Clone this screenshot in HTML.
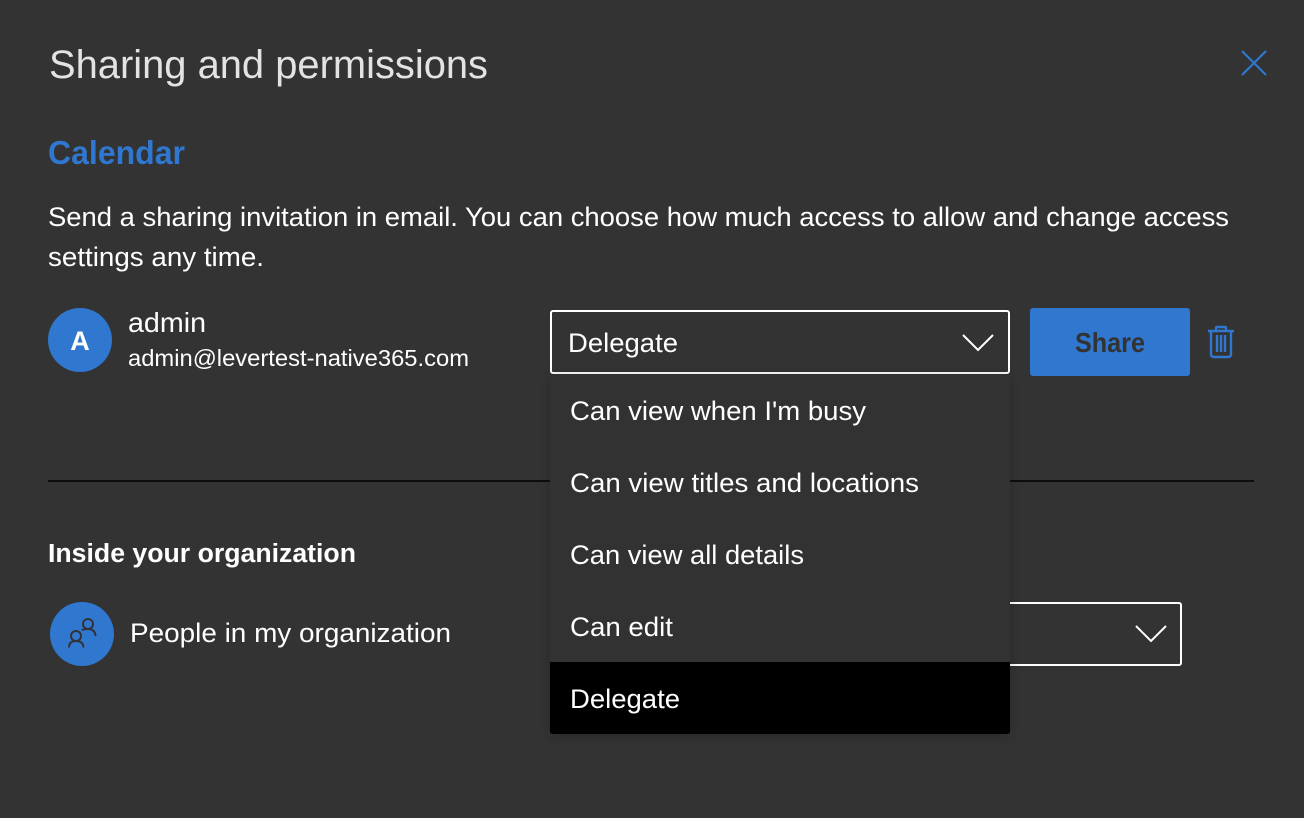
<!DOCTYPE html>
<html><head><meta charset="utf-8"><style>
html,body{margin:0;padding:0;background:#333;width:1304px;height:818px;overflow:hidden}
svg{display:block}
text{font-family:"Liberation Sans",sans-serif;fill:#fff}
</style></head><body>
<svg width="1304" height="818" viewBox="0 0 1304 818" xmlns="http://www.w3.org/2000/svg">
<defs><filter id="s" x="-10%" y="-10%" width="120%" height="120%"><feDropShadow dx="0" dy="2" stdDeviation="6" flood-color="#000" flood-opacity=".22"/></filter></defs>
<rect width="1304" height="818" fill="#333"/>
<text x="49" y="78" font-size="40" fill-opacity=".92" style="fill:#f2f2f2" textLength="439" lengthAdjust="spacingAndGlyphs">Sharing and permissions</text>
<path d="M1242 51L1266 75M1266 51L1242 75" stroke="#2f77cf" stroke-width="2.200" fill="none"/>
<text x="48" y="164" font-size="33" font-weight="700" style="fill:#2f77cf" textLength="137" lengthAdjust="spacingAndGlyphs">Calendar</text>
<text x="48" y="226" font-size="26.500" textLength="1181" lengthAdjust="spacingAndGlyphs">Send a sharing invitation in email. You can choose how much access to allow and change access</text>
<text x="48" y="266" font-size="26.500" textLength="216" lengthAdjust="spacingAndGlyphs">settings any time.</text>
<circle cx="80" cy="340" r="32" fill="#2f77cf"/>
<text x="80" y="350" font-size="27" font-weight="700" text-anchor="middle">A</text>
<text x="128" y="332" font-size="27.500" textLength="78" lengthAdjust="spacingAndGlyphs">admin</text>
<text x="128" y="366" font-size="23" textLength="341" lengthAdjust="spacingAndGlyphs">admin@levertest-native365.com</text>
<rect x="551" y="311" width="458" height="62" rx="2" fill="none" stroke="#fff" stroke-width="2"/>
<text x="568" y="352" font-size="27" textLength="110" lengthAdjust="spacingAndGlyphs">Delegate</text>
<path d="M963 335L978 350L993 335" fill="none" stroke="#fff" stroke-width="2"/>
<rect x="1030" y="308" width="160" height="68" rx="3" fill="#2f77cf"/>
<text x="1075" y="352" font-size="28" font-weight="700" style="fill:#333" textLength="70" lengthAdjust="spacingAndGlyphs">Share</text>
<g fill="none" stroke="#2f77cf" stroke-width="2.400"><path d="M1208 331H1234M1216 331V328Q1216 327 1217 327H1225Q1226 327 1226 328V331"/><path d="M1211 331V354Q1211 357 1214 357H1228Q1231 357 1231 354V331"/><path d="M1217 335V352M1221 335V352M1225 335V352"/></g>
<rect x="48" y="480" width="1206" height="2" fill="#0d0d0d"/>
<text x="48" y="562" font-size="25.500" font-weight="700" textLength="308" lengthAdjust="spacingAndGlyphs">Inside your organization</text>
<circle cx="82" cy="634" r="32" fill="#2f77cf"/>
<g fill="none" stroke="#333" stroke-width="2"><circle cx="88" cy="624" r="5"/><path d="M82 630.500Q83 629 88 629Q95 629 95.500 636"/><circle cx="76" cy="636" r="5"/><path d="M69 647.500Q69 641 76 641Q83 641 83.500 647.500"/></g>
<text x="130" y="642" font-size="26.500" textLength="321" lengthAdjust="spacingAndGlyphs">People in my organization</text>
<rect x="900" y="603" width="281" height="62" rx="2" fill="none" stroke="#fff" stroke-width="2"/>
<path d="M1136 626L1151 641L1166 626" fill="none" stroke="#fff" stroke-width="2"/>
<rect x="550" y="374" width="460" height="360" rx="3" fill="#333" filter="url(#s)"/>
<path d="M550 662H1010V731Q1010 734 1007 734H553Q550 734 550 731Z" fill="#000"/>
<text x="570" y="420" font-size="27" textLength="296" lengthAdjust="spacingAndGlyphs">Can view when I'm busy</text>
<text x="570" y="492" font-size="27" textLength="349" lengthAdjust="spacingAndGlyphs">Can view titles and locations</text>
<text x="570" y="564" font-size="27" textLength="234" lengthAdjust="spacingAndGlyphs">Can view all details</text>
<text x="570" y="636" font-size="27" textLength="103" lengthAdjust="spacingAndGlyphs">Can edit</text>
<text x="570" y="708" font-size="27" textLength="110" lengthAdjust="spacingAndGlyphs">Delegate</text>
</svg>
</body></html>
